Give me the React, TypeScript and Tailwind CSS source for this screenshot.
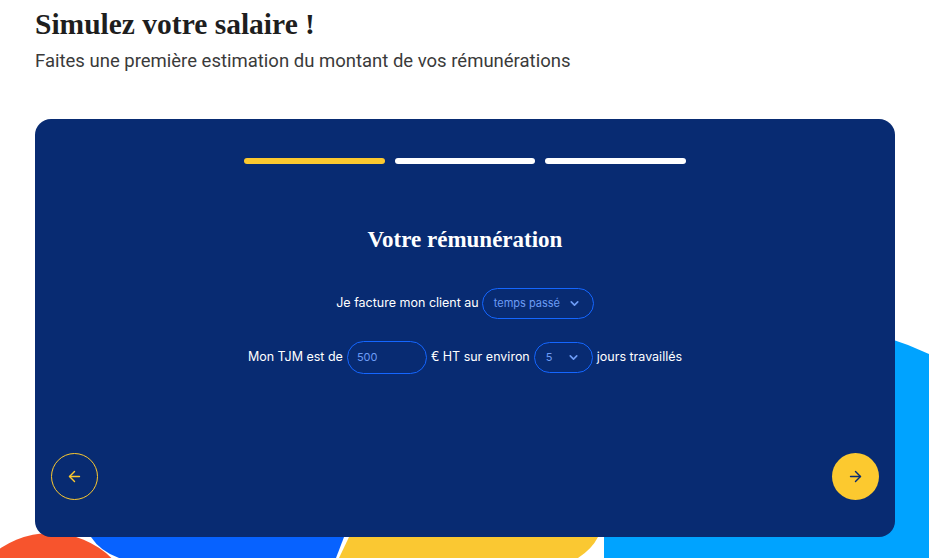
import { ArrowLeft, ArrowRight, ChevronDown } from 'lucide-react';

export default function App() {
  return (
    <div className="relative w-[929px] h-[558px] overflow-hidden bg-white font-['Inter',sans-serif]">
      {/* Decorative blobs */}
      <svg className="absolute inset-0" width="929" height="558" viewBox="0 0 929 558">
        <path d="M604 558 L604 398 A300 300 0 0 1 929 354 L929 558 Z" fill="#00a3ff" />
        <path d="M91 537 Q100 551 119 558 L336 558 L344 537 Z" fill="#0762ff" />
        <path d="M349 537 L339 558 L578 558 Q592 549 598 537 Z" fill="#fac832" />
        <circle cx="50" cy="621" r="88" fill="#f7542d" />
      </svg>

      <div className="relative pl-[35px] pt-[6px]">
        <h1 className="text-[29.5px] leading-[36px] font-bold text-[#1e1e1e] font-['Liberation_Serif',serif]">
          Simulez votre salaire !
        </h1>
        <p className="mt-[8px] text-[18.5px] leading-[22px] text-[#3a3a3a] font-['Roboto',sans-serif]">
          Faites une première estimation du montant de vos rémunérations
        </p>

        {/* Simulator card */}
        <div className="mt-[47px] w-[860px] h-[418px] rounded-2xl bg-[#082b72] flex flex-col items-center pt-[39px]">
          <div className="flex gap-[10px]">
            <div className="w-[141px] h-[6px] rounded-full bg-[#fcc92f]" />
            <div className="w-[140px] h-[6px] rounded-full bg-white" />
            <div className="w-[141px] h-[6px] rounded-full bg-white" />
          </div>

          <h2 className="mt-[64px] text-[23px] leading-[24px] font-bold text-white font-['Liberation_Serif',serif]">
            Votre rémunération
          </h2>

          <div className="mt-[36px] flex items-center gap-[3px] text-[12.5px] text-white">
            <span>Je facture mon client au</span>
            <div className="w-[112px] h-[31px] rounded-full border border-[#1466ff] flex items-center justify-between pl-[11px] pr-[12px]">
              <span className="text-[11px] text-[#6d9cf5]">temps passé</span>
              <ChevronDown size={13} strokeWidth={3} className="text-[#6d9cf5]" />
            </div>
          </div>

          <div className="mt-[22px] flex items-center gap-[4px] text-[12.5px] text-white">
            <span>Mon TJM est de</span>
            <div className="w-[80px] h-[33px] rounded-full border border-[#1466ff] flex items-center pl-[9px]">
              <span className="text-[11px] text-[#6d9cf5]">500</span>
            </div>
            <span>€ HT sur environ</span>
            <div className="w-[59px] h-[31px] rounded-full border border-[#1466ff] flex items-center justify-between pl-[11px] pr-[12px]">
              <span className="text-[11px] text-[#6d9cf5]">5</span>
              <ChevronDown size={13} strokeWidth={3} className="text-[#6d9cf5]" />
            </div>
            <span>jours travaillés</span>
          </div>

          <div className="flex-1" />

          <div className="w-full flex justify-between px-4 pb-[37px]">
            <button className="w-[47px] h-[47px] rounded-full border border-[#fcc92f] flex items-center justify-center">
              <ArrowLeft size={17} strokeWidth={2} className="text-[#fcc92f]" />
            </button>
            <button className="w-[47px] h-[47px] rounded-full bg-[#fcc92f] flex items-center justify-center">
              <ArrowRight size={17} strokeWidth={2} className="text-[#082b72]" />
            </button>
          </div>
        </div>
      </div>
    </div>
  );
}
